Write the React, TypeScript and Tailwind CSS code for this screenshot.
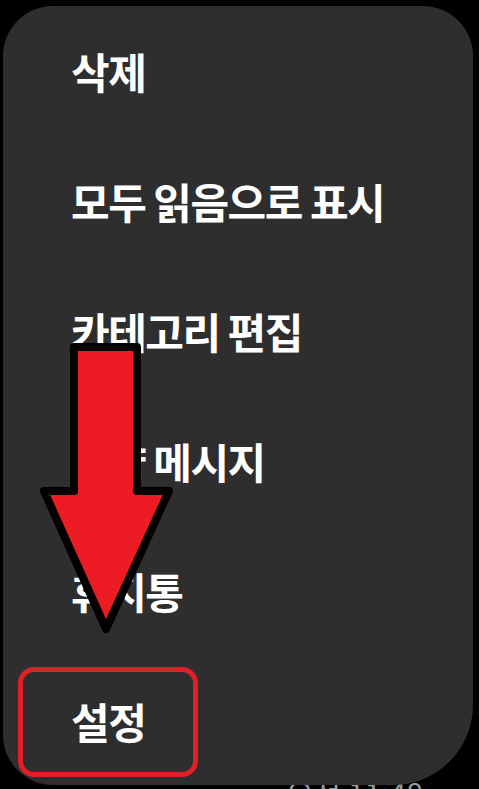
import React from 'react';

const items = ['삭제', '모두 읽음으로 표시', '카테고리 편집', '예약 메시지', '휴지통', '설정'];

export default function App() {
    return (
        <div className="relative w-[479px] h-[789px] overflow-hidden bg-black" style={{ fontFamily: '"Noto Sans CJK KR", "Noto Sans", sans-serif' }}>
            {/* menu panel */}
            <div className="relative z-10 ml-[3px] mr-[6px] mt-[6px] h-[779px] rounded-[50px] rounded-br-[80px] bg-[#2e2e2e]">
                <ul className="flex flex-col">
                    {items.map(label => (
                        <li key={label} className="h-[130px] flex items-center pl-[68px] text-[42px] font-semibold tracking-[-1.5px] text-white leading-none">
                            {label}
                        </li>
                    ))}
                </ul>

                {/* annotation: box round 설정 */}
                <div className="absolute left-[15px] top-[661px] w-[180px] h-[110px] rounded-[16px] border-[5px] border-[#e21f26]" />

                {/* annotation: arrow */}
                <svg className="absolute left-0 top-0" width="200" height="660" viewBox="0 0 200 660">
                    <path
                        d="M71 341 L134 341 L134 485 L166 485 L103 623 L41 485 L71 485 Z"
                        fill="#ed1c24"
                        stroke="#000"
                        strokeWidth="8"
                        strokeLinejoin="round"
                    />
                </svg>
            </div>

            {/* timestamp peeking from under the panel */}
            <div className="-mt-[8px] pl-[286px] text-[30px] text-[#9a9a9a] leading-none">오전 11:48</div>
        </div>
    );
}
